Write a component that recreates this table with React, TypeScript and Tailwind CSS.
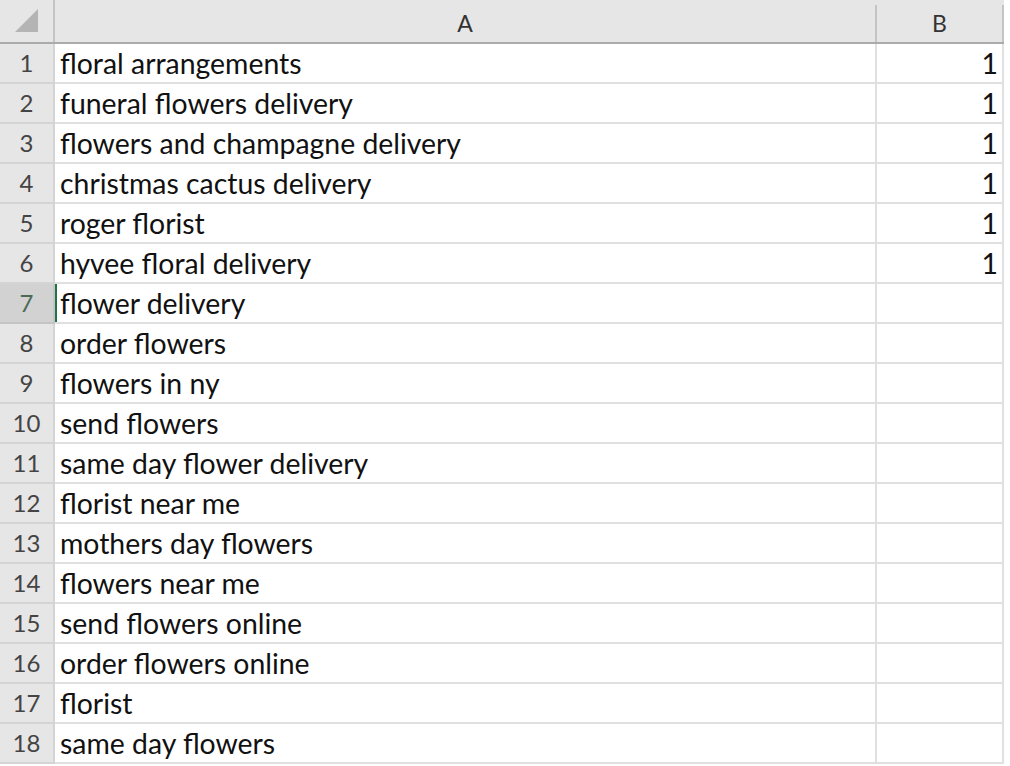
import React from 'react';

const rows: [string, string][] = [
  ['floral arrangements', '1'],
  ['funeral flowers delivery', '1'],
  ['flowers and champagne delivery', '1'],
  ['christmas cactus delivery', '1'],
  ['roger florist', '1'],
  ['hyvee floral delivery', '1'],
  ['flower delivery', ''],
  ['order flowers', ''],
  ['flowers in ny', ''],
  ['send flowers', ''],
  ['same day flower delivery', ''],
  ['florist near me', ''],
  ['mothers day flowers', ''],
  ['flowers near me', ''],
  ['send flowers online', ''],
  ['order flowers online', ''],
  ['florist', ''],
  ['same day flowers', ''],
];

export default function App() {
  return (
    <div
      className="w-[1010px] h-[766px] bg-white overflow-hidden text-[#111]"
      style={{ fontFamily: 'Lato, "Open Sans", sans-serif' }}
    >
      <div className="w-[1004px]">
        {/* column headers */}
        <div className="flex h-[44px] bg-[#e6e6e6] border-b-2 border-[#ababab]">
          <div className="w-[55px] h-full border-r-2 border-[#c4c4c4] flex items-center justify-center">
            <svg width="26" height="26" viewBox="0 0 26 26">
              <polygon points="24,1 24,24 1,24" fill="#b4b4b4" />
            </svg>
          </div>
          <div className="w-[822px] mt-[5px] border-r-2 border-[#c4c4c4] flex items-center justify-center text-[23px] text-[#333]">
            A
          </div>
          <div className="w-[127px] mt-[5px] border-r-2 border-[#c4c4c4] flex items-center justify-center text-[23px] text-[#333]">
            B
          </div>
        </div>

        {rows.map(([a, b], i) => {
          const selected = i === 6;
          return (
            <div key={i} className="flex h-[40px]">
              <div
                className={
                  selected
                    ? 'w-[55px] border-r-2 border-b-2 border-[#c4c4c4] bg-[#d2d2d2] text-[#4b6b58] flex items-center justify-center text-[24px]'
                    : 'w-[55px] border-r-2 border-b-2 border-[#d4d4d4] bg-[#e6e6e6] text-[#444] flex items-center justify-center text-[24px]'
                }
              >
                {i + 1}
              </div>
              <div
                className={
                  selected
                    ? 'w-[822px] border-r-2 border-b-2 border-[#e0e0e0] flex items-center pl-[5px] text-[28.4px] shadow-[inset_2px_0_0_#217346]'
                    : 'w-[822px] border-r-2 border-b-2 border-[#e0e0e0] flex items-center pl-[5px] text-[28.4px]'
                }
              >
                {a}
              </div>
              <div className="w-[127px] border-r-2 border-b-2 border-[#e0e0e0] flex items-center justify-end pr-[4px] text-[28.4px]">
                {b}
              </div>
            </div>
          );
        })}
      </div>
    </div>
  );
}
